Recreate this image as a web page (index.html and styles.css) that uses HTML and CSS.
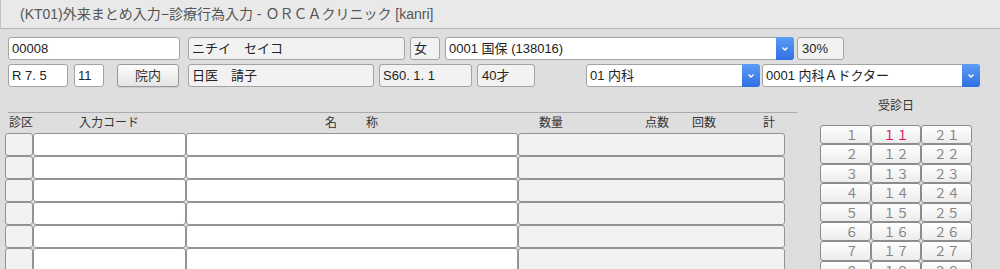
FILE: index.html
```html
<!DOCTYPE html>
<html>

<head>
    <meta charset="utf-8">
    <title>診療行為入力</title>
    <link rel="stylesheet" href="styles.css">
</head>

<body>
    <div class="titlebar">(KT01)外来まとめ入力−診療行為入力 - ＯＲＣＡクリニック [kanri]</div>

    <div class="form">
        <div class="form-row">
            <div class="field edit f-ptnum">00008</div>
            <div class="field f-kana">ニチイ　セイコ</div>
            <div class="field f-sex">女</div>
            <div class="combo f-hoken">
                <span class="combo-text">0001 国保 (138016)</span>
                <span class="combo-btn"><svg width="8" height="6" viewBox="0 0 8 6"><path d="M1.5 1.5 L4 4 L6.5 1.5" fill="none" stroke="#fff" stroke-width="1.4"/></svg></span>
            </div>
            <div class="field f-rate">30%</div>
        </div>
        <div class="form-row">
            <div class="field edit f-date">R 7. 5</div>
            <div class="field edit f-day">11</div>
            <div class="btn f-inout">院内</div>
            <div class="field f-name">日医　請子</div>
            <div class="field f-birth">S60. 1. 1</div>
            <div class="field f-age">40才</div>
            <div class="combo f-ka">
                <span class="combo-text">01 内科</span>
                <span class="combo-btn"><svg width="8" height="6" viewBox="0 0 8 6"><path d="M1.5 1.5 L4 4 L6.5 1.5" fill="none" stroke="#fff" stroke-width="1.4"/></svg></span>
            </div>
            <div class="combo f-dr">
                <span class="combo-text">0001 内科Ａドクター</span>
                <span class="combo-btn"><svg width="8" height="6" viewBox="0 0 8 6"><path d="M1.5 1.5 L4 4 L6.5 1.5" fill="none" stroke="#fff" stroke-width="1.4"/></svg></span>
            </div>
        </div>
    </div>

    <div class="main">
        <div class="sheet">
            <div class="sheet-rule"></div>
            <div class="sheet-head">
                <span class="h-kubun">診区</span>
                <span class="h-code">入力コード</span>
                <span class="h-mei">名</span>
                <span class="h-sho">称</span>
                <span class="h-qty">数量</span>
                <span class="h-ten">点数</span>
                <span class="h-kai">回数</span>
                <span class="h-kei">計</span>
            </div>
            <div class="sheet-grid" id="sheetGrid"></div>
        </div>

        <div class="days">
            <div class="days-title">受診日</div>
            <div class="days-grid" id="daysGrid"></div>
        </div>
    </div>

    <script>
        // 入力行
        const grid = document.getElementById("sheetGrid");
        for (let i = 0; i < 6; i++) {
            grid.innerHTML += '<div class="cell dim"></div><div class="cell"></div><div class="cell"></div><div class="cell dim"></div>';
        }

        // 受診日ボタン (全角数字)
        function zen(n) {
            const s = String(n).replace(/[0-9]/g, c => String.fromCharCode(c.charCodeAt(0) + 0xFEE0));
            return s.length === 1 ? "　" + s : s;
        }
        const days = document.getElementById("daysGrid");
        for (let r = 1; r <= 8; r++) {
            for (let c = 0; c < 3; c++) {
                const d = r + c * 10;
                const cls = d === 11 ? "day today" : "day";
                days.innerHTML += '<div class="' + cls + '">' + zen(d) + '</div>';
            }
        }
    </script>
</body>

</html>
```

FILE: styles.css
```css
body {
    margin: 0;
    height: 269px;
    overflow: hidden;
    background-color: #dedede;
    font-family: "Liberation Sans", "Noto Sans CJK JP", sans-serif;
    font-size: 13px;
    color: #222;
}

.titlebar {
    height: 28px;
    line-height: 28px;
    padding-left: 19px;
    background-color: #e9e9e9;
    border-left: 1px solid #c4c4c4;
    border-bottom: 1px solid #b5b5b5;
    color: #555;
    font-size: 14px;
    white-space: nowrap;
}

/* 患者情報 */
.form {
    padding: 8px 0 0 8px;
}

.form-row {
    display: flex;
    height: 23px;
}

.form-row + .form-row {
    margin-top: 4px;
}

.field {
    box-sizing: border-box;
    height: 23px;
    padding: 0 3px;
    line-height: 21px;
    background-color: #f2f2f2;
    border: 1px solid #a3a3a3;
    border-radius: 3px;
    white-space: nowrap;
    overflow: hidden;
}

.field.edit {
    background-color: #fff;
}

.btn {
    box-sizing: border-box;
    height: 23px;
    line-height: 21px;
    text-align: center;
    color: #333;
    background: linear-gradient(#fdfdfd, #e4e4e4);
    border: 1px solid #999;
    border-radius: 3px;
    box-shadow: 0 1px 0 rgba(0, 0, 0, 0.08);
}

.combo {
    box-sizing: border-box;
    display: flex;
    height: 23px;
    background-color: #fff;
    border: 1px solid #a3a3a3;
    border-radius: 3px;
}

.combo-text {
    flex: 1;
    padding: 0 3px;
    line-height: 21px;
    white-space: nowrap;
    overflow: hidden;
}

.combo-btn {
    display: flex;
    align-items: center;
    justify-content: center;
    width: 18px;
    margin: -1px -1px -1px 0;
    background: linear-gradient(#5c9df6, #2f6fe4);
    border-radius: 0 3px 3px 0;
}

.f-ptnum { width: 172px; }
.f-kana  { width: 217px; margin-left: 8px; }
.f-sex   { width: 30px; margin-left: 5px; }
.f-hoken { width: 349px; margin-left: 5px; }
.f-rate  { width: 47px; margin-left: 3px; padding-left: 4px; }

.f-date  { width: 60px; }
.f-day   { width: 30px; margin-left: 6px; }
.f-inout { width: 62px; margin-left: 13px; }
.f-name  { width: 186px; margin-left: 9px; }
.f-birth { width: 93px; margin-left: 5px; }
.f-age   { width: 58px; margin-left: 5px; padding-left: 4px; }
.f-ka    { width: 174px; margin-left: 51px; }
.f-dr    { width: 218px; margin-left: 2px; }

/* 入力シート */
.main {
    display: flex;
    margin-top: 11px;
    padding-left: 5px;
}

.sheet {
    width: 792px;
    padding-top: 14px;
}

.sheet-rule {
    margin-left: 3px;
    border-top: 1px solid #ababab;
}

.sheet-head {
    display: flex;
    height: 20px;
    line-height: 20px;
    font-size: 12px;
    color: #333;
    white-space: nowrap;
}

.h-kubun { margin-left: 4px; }
.h-code  { margin-left: 46px; }
.h-mei   { margin-left: 186px; }
.h-sho   { margin-left: 29px; }
.h-qty   { margin-left: 161px; }
.h-ten   { margin-left: 82px; }
.h-kai   { margin-left: 23px; }
.h-kei   { margin-left: 47px; }

.sheet-grid {
    display: grid;
    grid-template-columns: 28px 153px 332px 267px;
    grid-auto-rows: 23px;
}

.cell {
    background-color: #fff;
    border: 1px solid #939393;
    border-radius: 3px;
}

.cell.dim {
    background-color: #f2f2f2;
}

/* 受診日 */
.days {
    width: 152px;
    margin-left: 23px;
}

.days-title {
    height: 16px;
    line-height: 16px;
    margin-bottom: 11px;
    text-align: center;
    font-size: 12px;
    color: #333;
}

.days-grid {
    display: grid;
    grid-template-columns: repeat(3, 1fr);
    grid-auto-rows: 19.4px;
}

.day {
    box-sizing: border-box;
    text-align: center;
    line-height: 17px;
    font-family: "Noto Sans CJK JP", sans-serif;
    font-size: 13px;
    color: #858585;
    background: linear-gradient(#fff, #ececec);
    border: 1px solid #8c8c8c;
    border-radius: 3px;
    white-space: pre;
}

.day.today {
    color: #e0106c;
}
```
